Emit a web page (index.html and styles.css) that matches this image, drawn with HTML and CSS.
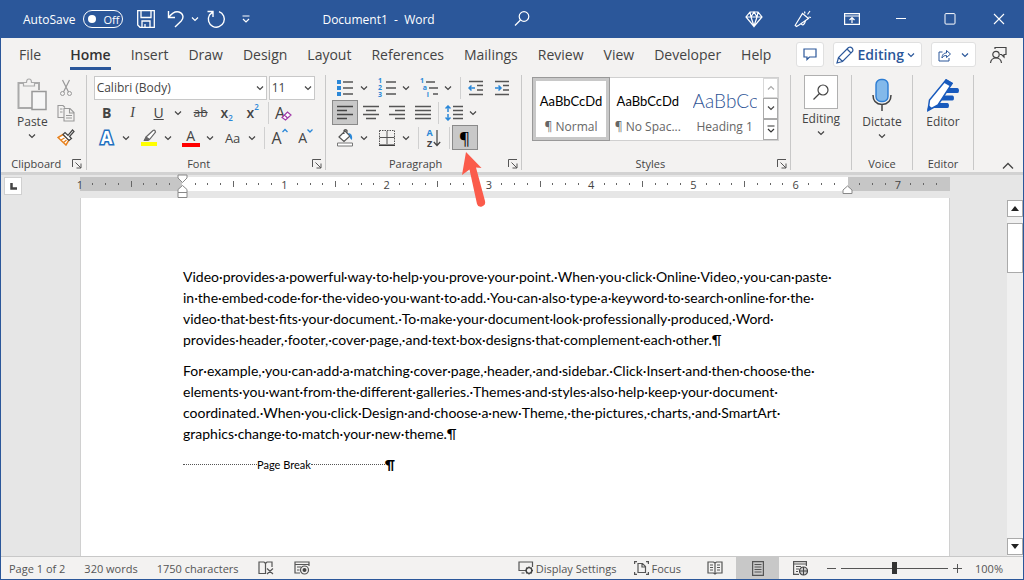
FILE: index.html
```html
<!DOCTYPE html>
<html lang="en">
  <head>
    <meta charset="UTF-8" />
    <meta name="viewport" content="width=device-width, initial-scale=1.0" />
    <title>Document1 - Word</title>
    <link rel="stylesheet" href="styles.css">
  </head>
  <body>
    <svg class="defs" aria-hidden="true">
      <symbol id="chev" viewBox="0 0 8 8"><path d="M1 2.5 4 5.5 7 2.5" fill="none" stroke="currentColor" stroke-width="1.2"/></symbol>
      <symbol id="launch" viewBox="0 0 10 10"><path d="M.5 8V.5H9M3.500 3.500 9 9M9 4.500V9H4.500" fill="none" stroke="#555"/></symbol>
    </svg>

    <header class="titlebar">
      <label class="autosave">AutoSave
        <span class="switch"><input type="checkbox" class="switch-input"><span class="knob"></span>Off</span>
      </label>
      <div class="quick">
        <button class="quick-btn" aria-label="Save"><svg width="18" height="18" viewBox="0 0 18 18"><path d="M.7.700H17.300V17.300H3L.7 15zM4 .7V7.500H14V.7M5 17V11H13V17M8 17V14" fill="none" stroke="#fff" stroke-width="1.300"/></svg></button>
        <button class="quick-btn" aria-label="Undo"><svg width="18" height="18" viewBox="0 0 18 18"><path d="M1.500 1V7.500H8M1.800 7.200C5 3 8.500 1 12 2c4.500 1.400 5 6 2.200 9L8 17" fill="none" stroke="#fff" stroke-width="1.400"/></svg></button>
        <button class="quick-chev" aria-label="Undo list"><svg width="8" height="8"><use href="#chev"/></svg></button>
        <button class="quick-btn redo" aria-label="Redo"><svg width="20" height="20" viewBox="0 0 20 20"><path d="M1.500 2.500H7V8M13 2.600A8 8 0 1 1 3.500 6L7 2.800" fill="none" stroke="#fff" stroke-width="1.400"/></svg></button>
        <button class="quick-btn" aria-label="Customize"><svg width="8" height="9" viewBox="0 0 8 9"><path d="M.5 1H7.500M1 4 4 7 7 4" fill="none" stroke="#fff" stroke-width="1.200"/></svg></button>
      </div>
      <div class="doc-title">Document1&nbsp; -&nbsp; Word</div>
      <button class="search" aria-label="Search"><svg width="18" height="18" viewBox="0 0 18 18"><circle cx="11" cy="6.500" r="4.800" fill="none" stroke="#fff" stroke-width="1.200"/><path d="M7.500 10 2 15.500" stroke="#fff" stroke-width="1.300"/></svg></button>
      <div class="window-btns">
        <button aria-label="Premium"><svg width="18" height="18" viewBox="0 0 18 18"><path d="M5 2H13L17 7 9 16.500 1 7zM1 7H17M5 2 6 7 9 16 12 7 13 2M6 7 9 2 12 7" fill="none" stroke="#fff" stroke-width="1.200"/></svg></button>
        <button aria-label="What's new"><svg width="18" height="18" viewBox="0 0 18 18"><path d="M8.500 3.500 14.500 8.500 5 15 2.500 16.500 1.200 15.300zM7 13.500c1 2 3 2.500 4.500-2.500M10.500 1.500 11 3.500M16 1 13.500 4.500M14.500 7 17 7.500" fill="none" stroke="#fff" stroke-width="1.200"/></svg></button>
        <button aria-label="Ribbon display"><svg width="16" height="14" viewBox="0 0 16 14"><path d="M.6 1.600H15.400V12.400H.6zM.6 4H15.400M8 11V6M5.500 8 8 5.500 10.500 8" fill="none" stroke="#fff" stroke-width="1.200"/></svg></button>
        <button aria-label="Minimize"><svg width="12" height="12" viewBox="0 0 12 12"><path d="M1 5.500H11" stroke="#fff"/></svg></button>
        <button aria-label="Maximize"><svg width="12" height="12" viewBox="0 0 12 12"><rect x="1" y=".6" width="10" height="10.500" rx="1" fill="none" stroke="#fff"/></svg></button>
        <button aria-label="Close"><svg width="12" height="12" viewBox="0 0 12 12"><path d="M1 1 11 11M11 1 1 11" stroke="#fff" stroke-width="1.100"/></svg></button>
      </div>
    </header>

    <nav class="tabs">
      <button class="tab">File</button>
      <button class="tab active">Home</button>
      <button class="tab">Insert</button>
      <button class="tab">Draw</button>
      <button class="tab">Design</button>
      <button class="tab">Layout</button>
      <button class="tab">References</button>
      <button class="tab">Mailings</button>
      <button class="tab">Review</button>
      <button class="tab">View</button>
      <button class="tab">Developer</button>
      <button class="tab">Help</button>
      <div class="tab-actions">
        <button class="pill" aria-label="Comments"><svg width="14" height="13" viewBox="0 0 14 13"><path d="M1 1H13V9H6.500L4 11.500V9H1z" fill="none" stroke="#2b579a" stroke-width="1.200"/></svg></button>
        <button class="pill mode"><svg width="18" height="18" viewBox="0 0 18 18"><path d="M1 17 2.500 11.500 12.500 1.500Q14.500.500 16 2T16.500 5.500L6.500 15.500zM11 3 15 7M2.500 11.500 6.500 15.500" fill="none" stroke="#2b579a" stroke-width="1.200"/></svg>Editing<svg width="8" height="8"><use href="#chev"/></svg></button>
        <button class="pill share" aria-label="Share"><svg width="14" height="14" viewBox="0 0 14 14"><path d="M4.500 4H1V13H11V10M4 10C4 6 6.500 5 8.500 5V2.500L12.500 6 8.500 9.500V7.500C6.500 7.500 5 8 4 10z" fill="none" stroke="#2b579a"/></svg><svg width="8" height="8"><use href="#chev"/></svg></button>
        <button class="account" aria-label="Account"><svg width="18" height="18" viewBox="0 0 18 18"><circle cx="7" cy="8.500" r="3.200" fill="none" stroke="#444" stroke-width="1.200"/><path d="M1.500 17C2 13 4.500 12 7 12S12 13 12.500 17M6 3V1.500H17V8.500H15V11L12.500 8.500H11" fill="none" stroke="#444" stroke-width="1.200"/></svg></button>
      </div>
    </nav>

    <section class="ribbon">
      <div class="group clipboard">
        <div class="group-body">
          <button class="big">
            <svg width="30" height="34" viewBox="0 0 30 34"><path d="M7 5H1.500V30H15M22 12V5H17" fill="none" stroke="#aaa" stroke-width="2"/><path d="M6.500 8V4.500H9.500Q9.500 1 12 1T14.500 4.500H17.500V8z" fill="#f3f2f1" stroke="#aaa" stroke-width="1.200"/><rect x="15" y="13.500" width="14" height="18" fill="#f6f6f6" stroke="#999" stroke-width="1.500"/></svg>
            Paste
            <svg width="8" height="8"><use href="#chev"/></svg>
          </button>
          <div class="stack">
            <button class="tool" aria-label="Cut"><svg width="14" height="18" viewBox="0 0 14 18"><path d="M3.500 1 9.500 13M10.500 1 4.500 13" stroke="#999" stroke-width="1.200"/><circle cx="3.500" cy="14.500" r="2" fill="none" stroke="#999"/><circle cx="10.500" cy="14.500" r="2" fill="none" stroke="#999"/></svg></button>
            <button class="tool" aria-label="Copy"><svg width="18" height="18" viewBox="0 0 18 18"><path d="M7 13.500H1V1.500H6L8 3.500M7 4.500H13L17 8.500V17H7zM12.500 4.500V9H17M9 11.500H15M9 14H15M3 5H5.500M3 8H5.500" fill="none" stroke="#999" stroke-width="1.100"/></svg></button>
            <button class="tool" aria-label="Format painter"><svg width="18" height="17" viewBox="0 0 18 17"><path d="M6 5.500 1 8.500 9 16 12 11z" fill="#fff" stroke="#e8821e" stroke-width="1.500"/><path d="M4 11 7.500 9M6.500 13.500 9.500 11" stroke="#e8821e" stroke-width="1.300"/><path d="M9 4.500 11 6.300 15.500 1 17 2.500 12.500 7.500 14.500 9.500 12 11.500 6 5.500 8 3.500z" fill="#fff" stroke="#444" stroke-width="1.200"/></svg></button>
          </div>
        </div>
        <div class="group-label"><span>Clipboard</span><button class="launcher" aria-label="Clipboard options"><svg width="10" height="10"><use href="#launch"/></svg></button></div>
      </div>

      <div class="group font">
        <div class="row fields">
          <label class="combo font-name"><select aria-label="Font"><option>Calibri (Body)</option></select><svg width="8" height="8"><use href="#chev"/></svg></label>
          <label class="combo font-size"><select aria-label="Font size"><option>11</option></select><svg width="8" height="8"><use href="#chev"/></svg></label>
        </div>
        <div class="row">
          <button class="tool bold">B</button>
          <button class="tool italic">I</button>
          <button class="tool underline">U</button>
          <button class="drop" aria-label="Underline styles"><svg width="8" height="8"><use href="#chev"/></svg></button>
          <button class="tool strike">ab</button>
          <button class="tool script">x<sub>2</sub></button>
          <button class="tool script">x<sup>2</sup></button>
          <i class="sep"></i>
          <button class="tool letter clear">A<svg width="11" height="10" viewBox="0 0 11 10"><path d="M1 6.500 6.500 1 10 4 4.500 9zM3.500 4 7 7.500" fill="#fff" stroke="#a03aa8" stroke-width="1.200"/></svg></button>
        </div>
        <div class="row">
          <button class="tool" aria-label="Text effects"><span class="effect">A</span></button>
          <button class="drop" aria-label="Text effect list"><svg width="8" height="8"><use href="#chev"/></svg></button>
          <button class="tool" aria-label="Highlight"><svg width="18" height="18" viewBox="0 0 18 18"><path d="M1 13H17V17H1z" fill="#ff0"/><path d="M6 8 13 1.500Q15 .5 15.500 3L9.500 10.500zM6 8 4.500 11.500H8L9.500 10.500" fill="#fff" stroke="#666" stroke-width="1.200"/><path d="M6 8 9.500 10.500 8 11.500H3.500z" fill="#666"/></svg></button>
          <button class="drop" aria-label="Highlight colors"><svg width="8" height="8"><use href="#chev"/></svg></button>
          <button class="tool colored">A</button>
          <button class="drop" aria-label="Font colors"><svg width="8" height="8"><use href="#chev"/></svg></button>
          <button class="tool case">Aa</button>
          <button class="drop" aria-label="Change case"><svg width="8" height="8"><use href="#chev"/></svg></button>
          <i class="sep"></i>
          <button class="tool letter">A<svg width="6" height="14" viewBox="0 0 6 14"><path d="M.5 4 3 1.500 5.500 4" fill="none" stroke="#2b88d8" stroke-width="1.300"/></svg></button>
          <button class="tool letter small">A<svg width="6" height="14" viewBox="0 0 6 14"><path d="M.5 1.500 3 4 5.500 1.500" fill="none" stroke="#2b88d8" stroke-width="1.300"/></svg></button>
        </div>
        <div class="group-label"><span>Font</span><button class="launcher" aria-label="Font options"><svg width="10" height="10"><use href="#launch"/></svg></button></div>
      </div>

      <div class="group paragraph">
        <div class="row">
          <button class="tool" aria-label="Bullets"><svg width="18" height="18" viewBox="0 0 18 18"><path d="M1 1h4v4H1zM1 7h4v4H1zM1 13h4v4H1z" fill="#2b88d8"/><path d="M7 3H17M7 9H17M7 15H17" stroke="#555" stroke-width="1.300"/></svg></button>
          <button class="drop" aria-label="Bullet list"><svg width="8" height="8"><use href="#chev"/></svg></button>
          <button class="tool list" aria-label="Numbering"><span class="digits"><b>1</b><b>2</b><b>3</b></span><svg width="10" height="18" viewBox="0 0 10 18"><path d="M0 3H10M0 9H10M0 15H10" stroke="#555" stroke-width="1.300"/></svg></button>
          <button class="drop" aria-label="Numbering list"><svg width="8" height="8"><use href="#chev"/></svg></button>
          <button class="tool list levels" aria-label="Multilevel list"><span class="digits"><b>1</b><b>a</b><b>i</b></span><svg width="12" height="18" viewBox="0 0 12 18"><path d="M-2 3H9M3 9H12M7 15H12" stroke="#555" stroke-width="1.300"/></svg></button>
          <button class="drop" aria-label="Multilevel styles"><svg width="8" height="8"><use href="#chev"/></svg></button>
          <i class="sep"></i>
          <button class="tool" aria-label="Decrease indent"><svg width="16" height="16" viewBox="0 0 16 16"><path d="M1 1.500H15M9 5.500H15M9 10H15M1 14.500H15" stroke="#555" stroke-width="1.300"/><path d="M7 8H1M3.500 5.500 1 8 3.500 10.500" fill="none" stroke="#2b88d8" stroke-width="1.500"/></svg></button>
          <button class="tool" aria-label="Increase indent"><svg width="16" height="16" viewBox="0 0 16 16"><path d="M1 1.500H15M9 5.500H15M9 10H15M1 14.500H15" stroke="#555" stroke-width="1.300"/><path d="M1 8H7M4.500 5.500 7 8 4.500 10.500" fill="none" stroke="#2b88d8" stroke-width="1.500"/></svg></button>
        </div>
        <div class="row">
          <button class="tool pressed" aria-label="Align left"><svg width="16" height="16" viewBox="0 0 16 16"><path d="M0 1.500H16M0 5.500H10M0 9.500H16M0 13.500H10" stroke="#444" stroke-width="1.300"/></svg></button>
          <button class="tool" aria-label="Center"><svg width="16" height="16" viewBox="0 0 16 16"><path d="M0 1.500H16M3 5.500H13M0 9.500H16M3 13.500H13" stroke="#555" stroke-width="1.300"/></svg></button>
          <button class="tool" aria-label="Align right"><svg width="16" height="16" viewBox="0 0 16 16"><path d="M0 1.500H16M6 5.500H16M0 9.500H16M6 13.500H16" stroke="#555" stroke-width="1.300"/></svg></button>
          <button class="tool" aria-label="Justify"><svg width="16" height="16" viewBox="0 0 16 16"><path d="M0 1.500H16M0 5.500H16M0 9.500H16M0 13.500H16" stroke="#555" stroke-width="1.300"/></svg></button>
          <i class="sep"></i>
          <button class="tool" aria-label="Line spacing"><svg width="18" height="16" viewBox="0 0 18 16"><path d="M8 1.500H18M8 5.500H18M8 9.500H18M8 13.500H18" stroke="#555" stroke-width="1.300"/><path d="M3 1V7M.5 3.500 3 1 5.500 3.500M3 9V15M.5 12.500 3 15 5.500 12.500" fill="none" stroke="#2b88d8" stroke-width="1.500"/></svg></button>
          <button class="drop" aria-label="Spacing list"><svg width="8" height="8"><use href="#chev"/></svg></button>
        </div>
        <div class="row">
          <button class="tool" aria-label="Shading"><svg width="18" height="18" viewBox="0 0 18 18"><path d="M3 8 9 2 14 7 8 12.500zM8 5V1.500Q9.500 0 11 1.500V4" fill="#fff" stroke="#555" stroke-width="1.200"/><path d="M12 4Q17 4 16 11 13 9 14 7z" fill="#2b88d8"/><path d="M1.500 14H16.500V17H1.500z" fill="#fff" stroke="#777"/></svg></button>
          <button class="drop" aria-label="Shading colors"><svg width="8" height="8"><use href="#chev"/></svg></button>
          <button class="tool" aria-label="Borders"><svg width="18" height="18" viewBox="0 0 18 18"><path d="M1.500 1.500H16.500V15M1.500 1.500V15" fill="none" stroke="#555" stroke-dasharray="1.500 1"/><path d="M9 2V15M1.500 8.500H16.500" stroke="#555"/><path d="M1 16.200H17" stroke="#333" stroke-width="1.500"/></svg></button>
          <button class="drop" aria-label="Border styles"><svg width="8" height="8"><use href="#chev"/></svg></button>
          <i class="sep"></i>
          <button class="tool sort" aria-label="Sort"><span class="az"><b>A</b><b>Z</b></span><svg width="8" height="18" viewBox="0 0 8 18"><path d="M4 1V16.500M.8 13 4 16.500 7.200 13" fill="none" stroke="#444" stroke-width="1.200"/></svg></button>
          <i class="sep"></i>
          <button class="tool pressed pilcrow">¶<svg class="pointer" width="24" height="58" viewBox="0 0 24 58"><path d="M4 1 19.500 17 14 16.500 23 50Q24 54 20 55.500 16 56.500 15 53L7.500 18.500 0 24z" fill="#fb5b4b"/></svg></button>
        </div>
        <div class="group-label"><span>Paragraph</span><button class="launcher" aria-label="Paragraph options"><svg width="10" height="10"><use href="#launch"/></svg></button></div>
      </div>

      <div class="group styles">
        <div class="gallery">
          <button class="style selected"><span class="sample">AaBbCcDd</span><span class="name">¶ Normal</span></button>
          <button class="style"><span class="sample">AaBbCcDd</span><span class="name">¶ No Spac...</span></button>
          <button class="style"><span class="sample heading">AaBbCc</span><span class="name">Heading 1</span></button>
          <div class="gallery-nav">
            <button class="dim" aria-label="Previous styles"><svg class="flip" width="8" height="8"><use href="#chev"/></svg></button>
            <button aria-label="Next styles"><svg width="8" height="8"><use href="#chev"/></svg></button>
            <button aria-label="More styles"><svg width="8" height="9" viewBox="0 0 8 9"><path d="M.5 1H7.500M1 4 4 7 7 4" fill="none" stroke="#333" stroke-width="1.200"/></svg></button>
          </div>
        </div>
        <div class="group-label"><span>Styles</span><button class="launcher" aria-label="Styles options"><svg width="10" height="10"><use href="#launch"/></svg></button></div>
      </div>

      <div class="group narrow">
        <button class="big find-btn">
          <span class="find"><svg width="18" height="18" viewBox="0 0 18 18"><circle cx="11" cy="7" r="5" fill="none" stroke="#444" stroke-width="1.200"/><path d="M7.500 10.500 1.500 16.500" stroke="#444" stroke-width="1.300"/></svg></span>
          Editing
          <svg width="8" height="8"><use href="#chev"/></svg>
        </button>
      </div>

      <div class="group narrow">
        <button class="big">
          <svg width="20" height="34" viewBox="0 0 20 34"><rect x="4" y="1.500" width="12" height="22" rx="5" fill="#83b9ea" stroke="#2b7cd3" stroke-width="1.400"/><path d="M1 17Q1 26 10 26.500 19 26 19 17M10 26.500V33" fill="none" stroke="#444" stroke-width="1.500"/></svg>
          Dictate
          <svg width="8" height="8"><use href="#chev"/></svg>
        </button>
        <div class="group-label"><span>Voice</span></div>
      </div>

      <div class="group narrow">
        <button class="big">
          <svg width="34" height="34" viewBox="0 0 34 34"><path d="M18 10H31.500Q33 10 33 12.500T31.500 15H16zM15 17.500H26.500Q28 17.500 28 20T26.500 22.500H12zM11 25H21.500Q23 25 23 27.500T21.500 30H7z" fill="#185abd"/><path d="M20 2 26 5.500 12 27 2 32.500 3.500 22z" fill="#fff" stroke="#185abd" stroke-width="1.500"/><path d="M20 1 27 5 24.500 8.500 17.500 4.500zM1 33 2.500 27 6 30z" fill="#185abd"/></svg>
          Editor
        </button>
        <div class="group-label"><span>Editor</span></div>
      </div>
      <button class="collapse" aria-label="Collapse ribbon"><svg width="12" height="8" viewBox="0 0 12 8"><path d="M1 6.500 6 1.500 11 6.500" fill="none" stroke="#444" stroke-width="1.300"/></svg></button>
    </section>

    <main class="workspace">
      <button class="tab-stop" aria-label="Tab stop"><svg width="7" height="7" viewBox="0 0 7 7"><path d="M1.500 0V5.500H7" fill="none" stroke="#444" stroke-width="2.500"/></svg></button>
      <div class="canvas">
        <div class="ruler">
          <div class="ruler-active"></div>
          <div class="marks" id="marks"></div>
          <svg class="marker first" width="11" height="25" viewBox="0 0 11 25"><path d="M1 1H10V4L5.500 8.500 1 4zM5.500 11.500 10 15.500V18.500H1V15.500zM1 18.500H10V23.500H1z" fill="#fff" stroke="#888"/></svg>
          <svg class="marker last" width="11" height="9" viewBox="0 0 11 9"><path d="M5.500 1 10 5V8.500H1V5z" fill="#fff" stroke="#888"/></svg>
        </div>
        <article class="page">
          <p>Video·provides·a·powerful·way·to·help·you·prove·your·point.·When·you·click·Online·Video,·you·can·paste·<br>in·the·embed·code·for·the·video·you·want·to·add.·You·can·also·type·a·keyword·to·search·online·for·the·<br>video·that·best·fits·your·document.·To·make·your·document·look·professionally·produced,·Word·<br>provides·header,·footer,·cover·page,·and·text·box·designs·that·complement·each·other.¶</p>
          <p>For·example,·you·can·add·a·matching·cover·page,·header,·and·sidebar.·Click·Insert·and·then·choose·the·<br>elements·you·want·from·the·different·galleries.·Themes·and·styles·also·help·keep·your·document·<br>coordinated.·When·you·click·Design·and·choose·a·new·Theme,·the·pictures,·charts,·and·SmartArt·<br>graphics·change·to·match·your·new·theme.¶</p>
          <div class="page-break"><i class="dots"></i><span>Page Break</span><i class="dots"></i><b>¶</b></div>
        </article>
      </div>
      <div class="scrollbar">
        <button aria-label="Scroll up"><svg width="8" height="5" viewBox="0 0 8 5"><path d="M0 5 4 0 8 5z" fill="#222"/></svg></button>
        <div class="thumb"></div>
        <button class="down" aria-label="Scroll down"><svg width="8" height="5" viewBox="0 0 8 5"><path d="M0 0 4 5 8 0z" fill="#222"/></svg></button>
      </div>
    </main>

    <footer class="status">
      <button>Page 1 of 2</button>
      <button>320 words</button>
      <button>1750 characters</button>
      <button aria-label="Proofing"><svg width="17" height="14" viewBox="0 0 17 14"><path d="M7 12.500H1V1H6L7.500 2.500 9 1H14V6M7.500 2.500V13M9 7.500 15 13M15 7.500 9 13" fill="none" stroke="#555" stroke-width="1.200"/></svg></button>
      <button aria-label="Macro recording"><svg width="16" height="14" viewBox="0 0 16 14"><path d="M6 12H1V1H15V5M1 3.500H15M3 6H7M3 9H5.500" fill="none" stroke="#555" stroke-width="1.200"/><circle cx="10.500" cy="9" r="4" fill="none" stroke="#555" stroke-width="1.200"/><circle cx="10.500" cy="9" r="2" fill="#444"/></svg></button>
      <div class="status-right">
        <button class="labelled"><svg width="16" height="14" viewBox="0 0 16 14"><path d="M14.500 6V1H1V9.500H7M3.500 12H6.500" fill="none" stroke="#555" stroke-width="1.200"/><circle cx="11" cy="9.500" r="2.800" fill="none" stroke="#444" stroke-width="1.300"/><path d="M11 5.500V7M11 12V13.500M7 9.500H8.500M13.500 9.500H15M8.200 6.700 9.200 7.700M12.800 11.300 13.800 12.300M13.800 6.700 12.800 7.700M9.200 11.300 8.200 12.300" stroke="#444" stroke-width="1.300"/></svg>Display Settings</button>
        <button class="labelled"><svg width="15" height="14" viewBox="0 0 15 14"><path d="M3 .6H.6V3M12 .6H14.400V3M3 13.400H.6V11M12 13.400H14.400V11M4 2.500H8.500L11.500 5.500V11.500H4zM8 2.500V6H11.500" fill="none" stroke="#555" stroke-width="1.200"/></svg>Focus</button>
        <div class="views">
          <button aria-label="Read mode"><svg width="16" height="14" viewBox="0 0 16 14"><path d="M8 2 6.500 1H1V12H6.500L8 13 9.500 12H15V1H9.500zM8 2V13M3 4H6M3 6.500H6M3 9H6M10 4H13M10 6.500H13M10 9H13" fill="none" stroke="#555" stroke-width="1.200"/></svg></button>
          <button class="on" aria-label="Print layout"><svg width="12" height="15" viewBox="0 0 12 15"><path d="M.6.600H11.400V14.400H.6zM2.500 3.500H9.500M2.500 6H9.500M2.500 8.500H9.500M2.500 11H9.500" fill="none" stroke="#555" stroke-width="1.200"/></svg></button>
          <button aria-label="Web layout"><svg width="15" height="15" viewBox="0 0 15 15"><path d="M6 13.400H.6V.600H13.400V5M.6 3H13.400M3 5.500H8M3 8H6M3 10.500H5" fill="none" stroke="#555" stroke-width="1.200"/><circle cx="10.500" cy="10" r="4" fill="#ccc" stroke="#444" stroke-width="1.200"/><path d="M6.500 10H14.500M10.500 6V14" stroke="#444"/></svg></button>
        </div>
        <button class="zoom-step" aria-label="Zoom out"><svg width="9" height="9" viewBox="0 0 9 9"><path d="M0 4.500H9" stroke="#555"/></svg></button>
        <input type="range" class="zoom" min="0" max="100" value="50" aria-label="Zoom">
        <button class="zoom-step" aria-label="Zoom in"><svg width="9" height="9" viewBox="0 0 9 9"><path d="M0 4.500H9M4.500 0V9" stroke="#555"/></svg></button>
        <button class="percent">100%</button>
      </div>
    </footer>

    <script>
      // 8.5 inches, one mark per eighth, starting one inch left of the margin
      const marks = document.getElementById("marks");
      for (let i = 0; i <= 68; i++) {
        const mark = document.createElement("span");
        const inch = Math.abs(i / 8 - 1);
        if (i === 8 || i === 68 || i === 60) {
          mark.className = "mark";
        } else if (i % 8 === 0) {
          mark.className = "mark number";
          mark.innerText = inch;
        } else {
          mark.className = i % 4 === 0 ? "mark half" : "mark eighth";
        }
        marks.appendChild(mark);
      }
    </script>
  </body>
</html>
```

FILE: styles.css
```css
* {
  box-sizing: border-box;
}

body {
  display: flex;
  flex-direction: column;
  height: 100vh;
  margin: 0;
  border: 1px solid #2b579a;
  border-top: none;
  overflow: hidden;
  font-family: "Open Sans", "Noto Sans", sans-serif;
  font-size: 12px;
  color: #444;
  background-color: #e6e6e6;
}

button {
  display: flex;
  align-items: center;
  justify-content: center;
  padding: 0;
  border: none;
  background: none;
  font: inherit;
  color: inherit;
  white-space: nowrap;
}

svg {
  flex-shrink: 0;
}

.defs {
  position: absolute;
  width: 0;
  height: 0;
}

/* title bar */
.titlebar {
  display: flex;
  align-items: center;
  flex-shrink: 0;
  height: 38px;
  padding-left: 22px;
  background-color: #2b579a;
  color: white;
}

.autosave {
  display: flex;
  align-items: center;
  gap: 8px;
}

.switch {
  display: flex;
  align-items: center;
  gap: 7px;
  width: 40px;
  height: 18px;
  padding-left: 4px;
  border: 1px solid white;
  border-radius: 9px;
  font-size: 11px;
}

.switch-input {
  position: absolute;
  opacity: 0;
}

.knob {
  width: 8px;
  height: 8px;
  border-radius: 50%;
  background-color: white;
}

.quick {
  display: flex;
  align-items: center;
  padding-left: 8px;
}

.quick-btn {
  width: 30px;
  height: 30px;
}

.redo {
  margin-left: 2px;
}

.quick-chev {
  width: 8px;
}

.doc-title {
  margin-left: 61px;
  font-size: 12px;
}

.search {
  margin-left: 78px;
}

.window-btns {
  display: flex;
  margin-left: auto;
}

.window-btns button {
  width: 49px;
  height: 38px;
}

/* tabs */
.tabs {
  display: flex;
  align-items: center;
  flex-shrink: 0;
  gap: 20px;
  height: 35px;
  padding: 0 0 2px 18px;
  background-color: #f3f2f1;
  font-size: 14px;
}

.tab {
  height: 31px;
  border-top: 3px solid transparent;
  border-bottom: 3px solid transparent;
}

.tab:first-child {
  margin-right: 9px;
}

.tab.active {
  border-bottom-color: #2b579a;
  font-weight: 600;
  color: #333;
}

.tab-actions {
  display: flex;
  align-items: center;
  gap: 9px;
  margin-left: auto;
  padding-right: 16px;
}

.pill {
  gap: 3px;
  height: 25px;
  padding: 0 6px;
  border: 1px solid #e0e0e0;
  border-radius: 3px;
  background-color: white;
  color: #2b579a;
}

.mode {
  padding: 0 6px 0 2px;
  font-weight: 600;
}

.share {
  gap: 9px;
}

.account {
  margin-left: 4px;
}

/* ribbon */
.ribbon {
  display: flex;
  flex-shrink: 0;
  height: 99px;
  padding: 2px 0;
  background-color: #f3f2f1;
}

.group {
  display: flex;
  flex-direction: column;
  padding: 0 6px;
  border-right: 1px solid #c8c8c8;
}

.group-body {
  display: flex;
  gap: 5px;
}

.row {
  display: flex;
  align-items: center;
  height: 25px;
}

.group-label {
  display: flex;
  align-items: center;
  justify-content: center;
  height: 12px;
  margin-top: auto;
  font-size: 11px;
  line-height: 12px;
}

.group-label span {
  flex-grow: 1;
  text-align: center;
}

.launcher {
  margin-right: -3px;
}

.big {
  flex-direction: column;
  align-self: center;
  justify-content: flex-start;
  gap: 2px;
  padding-top: 3px;
  line-height: 16px;
}

.stack {
  display: flex;
  flex-direction: column;
}

.clipboard {
  padding: 0 7px 0 0;
}

.clipboard .big {
  align-self: flex-start;
  padding-left: 16px;
}

.font {
  padding-left: 7px;
}

.font .group-label,
.paragraph .group-label,
.styles .group-label {
  margin-left: -8px;
}

.tool {
  width: 26px;
  height: 25px;
  font-size: 14px;
  line-height: 18px;
}

.drop {
  width: 12px;
  height: 25px;
  margin-right: 4px;
}

.sep {
  width: 1px;
  height: 22px;
  margin: 0 2px;
  background-color: #d0d0d0;
}

.pressed {
  border: 1px solid #8a8a8a;
  background-color: #c8c8c8;
}

.fields {
  gap: 2px;
}

.combo {
  display: grid;
  align-items: center;
  height: 24px;
  border: 1px solid #c8c8c8;
  background-color: white;
}

.combo select,
.combo svg {
  grid-area: 1 / 1;
}

.combo svg {
  justify-self: end;
  margin-right: 2px;
  pointer-events: none;
}

.combo select {
  appearance: none;
  width: 100%;
  padding: 0 2px;
  border: none;
  background: none;
  font: inherit;
  color: #444;
}

.font-name {
  width: 173px;
}

.font-size {
  width: 46px;
}

.bold {
  font-weight: 700;
}

.italic {
  font-family: "Liberation Serif", serif;
  font-style: italic;
}

.underline {
  text-decoration: underline;
}

.strike {
  font-size: 12px;
  text-decoration: line-through;
}

.script {
  font-weight: 600;
}

.script sub,
.script sup {
  font-size: 8px;
  line-height: 14px;
  color: #2b88d8;
}

.script sub {
  align-self: flex-end;
}

.script sup {
  align-self: flex-start;
}

.letter {
  font-size: 16px;
}

.letter svg {
  align-self: flex-start;
  margin-top: 3px;
}

.letter.clear svg {
  align-self: flex-end;
  margin: 0 0 4px -4px;
}

.letter.small {
  font-size: 14px;
}

.effect {
  font-size: 17px;
  font-weight: 700;
  color: white;
  -webkit-text-stroke: 3px #1e6fc0;
  paint-order: stroke fill;
}

.colored {
  width: 18px;
  height: 18px;
  margin: 0 4px;
  border-bottom: 4px solid red;
  line-height: 14px;
}

.case {
  font-size: 13px;
}

.list {
  gap: 3px;
}

.digits {
  display: flex;
  flex-direction: column;
  width: 5px;
  font-size: 7px;
  line-height: 7px;
  color: #2b88d8;
}

.levels {
  gap: 1px;
}

.levels b:nth-child(2) {
  padding-left: 3px;
}

.levels b:nth-child(3) {
  padding-left: 7px;
}

.az {
  display: flex;
  flex-direction: column;
  font-size: 9px;
  line-height: 11px;
}

.az b:first-child {
  color: #2b88d8;
}

.pilcrow {
  position: relative;
  font-size: 17px;
  color: black;
}

.pointer {
  position: absolute;
  top: 25px;
  left: 9px;
  z-index: 2;
}

/* styles gallery */
.styles {
  flex-grow: 1;
  padding-left: 10px;
}

.gallery {
  display: flex;
  height: 64px;
  margin: 2px 5px 0 0;
  border: 1px solid #d0d0d0;
  background-color: white;
}

.style {
  flex: 1 1 0;
  flex-direction: column;
  justify-content: flex-end;
  gap: 6px;
  min-width: 0;
  overflow: hidden;
  padding: 0 3px 2px;
  border: 3px solid transparent;
  line-height: 16px;
  color: #666;
}

.style.selected {
  border-color: #c8c8c8;
  outline: 1px solid #999;
}

.sample {
  height: 24px;
  line-height: 24px;
  font-family: Lato, sans-serif;
  font-size: 13px;
  color: black;
}

.sample.heading {
  width: 64px;
  overflow: hidden;
  text-align: left;
  font-size: 19px;
  font-weight: 300;
  color: #2f5496;
}

.gallery-nav {
  display: flex;
  flex-direction: column;
  width: 15px;
}

.gallery-nav button {
  flex-grow: 1;
  border: 1px solid #aaa;
}

.gallery-nav .dim {
  border-color: #d8d8d8;
  color: #aaa;
}

.flip {
  transform: rotate(180deg);
}

.narrow {
  width: 61px;
  padding: 0 2px;
}

.find-btn {
  padding-top: 0;
}

.find {
  display: flex;
  align-items: center;
  justify-content: center;
  width: 34px;
  height: 34px;
  border: 1px solid #b0b0b0;
  background-color: white;
}

.collapse {
  align-self: flex-end;
  margin: 0 9px 0 28px;
}

/* document area */
.workspace {
  display: grid;
  grid-template-columns: 22px 1fr 16px;
  flex-grow: 1;
  min-height: 0;
  border-top: 3px solid #d2d2d2;
}

.tab-stop {
  width: 18px;
  height: 18px;
  margin: 2px 0 0 3px;
  border: 1px solid #d0d0d0;
  background-color: white;
}

.canvas {
  display: flex;
  flex-direction: column;
  align-items: center;
  min-height: 0;
}

.ruler {
  position: relative;
  width: 870px;
  height: 14px;
  margin: 2px 0 7px;
  background-color: #c6c6c6;
}

.ruler-active {
  height: 14px;
  margin: 0 102px;
  background-color: white;
}

.marks {
  position: absolute;
  inset: 0;
  display: flex;
  align-items: center;
  justify-content: space-between;
}

.mark {
  display: flex;
  justify-content: center;
  width: 0;
  font-size: 11px;
}

.half::before {
  content: "";
  flex-shrink: 0;
  width: 1px;
  height: 6px;
  background-color: #666;
}

.eighth::before {
  content: "";
  flex-shrink: 0;
  width: 1px;
  height: 2px;
  background-color: #666;
}

.marker {
  position: absolute;
}

.marker.first {
  top: -3px;
  left: 97px;
}

.marker.last {
  top: 8px;
  right: 97px;
}

.page {
  flex-grow: 1;
  width: 870px;
  min-height: 0;
  padding: 68px 0 0 102px;
  border: 1px solid #d0d0d0;
  border-width: 0 1px;
  background-color: white;
  font-family: Lato, sans-serif;
  font-size: 14px;
  line-height: 21px;
  white-space: nowrap;
  color: black;
}

.page p {
  margin: 0 0 10px;
}

.page-break {
  display: flex;
  align-items: center;
}

.page-break span {
  font-size: 11px;
}

.dots {
  width: 74px;
  border-top: 1px dotted #555;
}

.scrollbar {
  display: flex;
  flex-direction: column;
  margin-top: 25px;
  padding-bottom: 1px;
  background-color: #f0f0f0;
}

.scrollbar button {
  height: 17px;
  border: 1px solid #aaa;
  background-color: white;
}

.thumb {
  height: 50px;
  margin-top: 6px;
  border: 1px solid #aaa;
  background-color: white;
}

.scrollbar .down {
  margin-top: auto;
}

/* status bar */
.status {
  display: flex;
  align-items: center;
  flex-shrink: 0;
  gap: 19px;
  height: 23px;
  padding: 0 20px 0 8px;
  border-top: 1px solid #c8c8c8;
  background-color: #f3f2f1;
  font-size: 11px;
  color: #555;
}

.status-right {
  display: flex;
  align-items: center;
  margin-left: auto;
}

.labelled {
  gap: 2px;
  margin-right: 18px;
}

.labelled + .views {
  margin-left: -6px;
}

.views {
  display: flex;
}

.views button {
  width: 43px;
  height: 22px;
}

.views .on {
  background-color: #c8c8c8;
}

.zoom-step {
  width: 19px;
}

.zoom {
  appearance: none;
  width: 107px;
  height: 12px;
  margin: 0;
  background: linear-gradient(#555, #555) center / 100% 1px no-repeat;
}

.zoom::-webkit-slider-thumb {
  appearance: none;
  width: 5px;
  height: 12px;
  background-color: #333;
}

.percent {
  margin-left: 8px;
}
```
